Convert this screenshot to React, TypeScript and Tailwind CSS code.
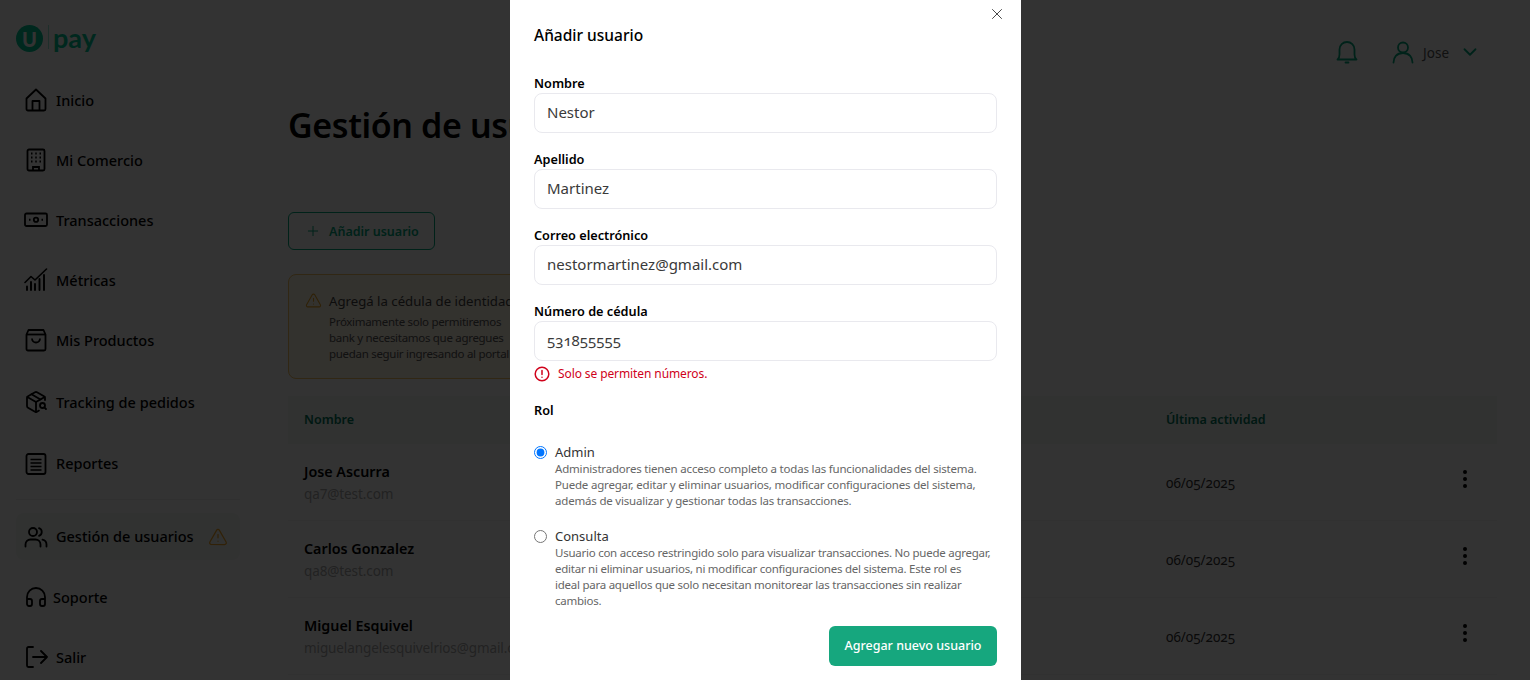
import React from 'react';
import { Plus, TriangleAlert, X, ChevronDown, EllipsisVertical, PackageSearch, Headphones } from 'lucide-react';

const font = { fontFamily: '"Noto Sans", sans-serif' };

const IconHome = () => (
  <svg width="24" height="24" viewBox="0 0 24 24" fill="none" stroke="currentColor" strokeWidth="1.800" strokeLinejoin="round">
    <path d="M2.500 10.500 12 1.500l9.500 9v10.500a1.500 1.500 0 0 1-1.500 1.500H4a1.500 1.500 0 0 1-1.500-1.500z" />
    <path d="M8.500 22.500V13h7v9.500" />
  </svg>
);

const IconBuilding = () => (
  <svg width="24" height="24" viewBox="0 0 24 24" fill="none" stroke="currentColor" strokeWidth="1.800">
    <rect x="3.500" y="1.500" width="17" height="21" rx="1.500" />
    <path d="M9 22.500V19h6v3.500" />
    <path d="M7 5.500h1.500M11.250 5.500h1.500M15.500 5.500H17M7 9.500h1.500M11.250 9.500h1.500M15.500 9.500H17M7 13.500h1.500M11.250 13.500h1.500M15.500 13.500H17" strokeWidth="2" />
  </svg>
);

const IconMoney = () => (
  <svg width="24" height="24" viewBox="0 0 24 24" fill="none" stroke="currentColor" strokeWidth="1.800">
    <rect x="1" y="5.500" width="22" height="12.500" rx="1.500" />
    <circle cx="12" cy="11.750" r="2.200" />
    <path d="M5 11.750h1.500M17.500 11.750H19" strokeWidth="2" />
  </svg>
);

const IconChart = () => (
  <svg width="24" height="24" viewBox="0 0 24 24" fill="none" stroke="currentColor" strokeWidth="1.600" strokeLinecap="round" strokeLinejoin="round">
    <path d="M1 14.500 7 8.500l4 3.500L22.500 1" />
    <path d="M3 22v-3.500M7 22v-8M11 22v-6M15.500 22V11M20 22V7" strokeWidth="1.900" />
  </svg>
);

const IconBag = () => (
  <svg width="24" height="24" viewBox="0 0 24 24" fill="none" stroke="currentColor" strokeWidth="1.800" strokeLinejoin="round">
    <path d="M4.500 2h15l2 4.500V21a1.500 1.500 0 0 1-1.500 1.500H4A1.500 1.500 0 0 1 2.500 21V6.500z" />
    <path d="M2.500 6.500h19" />
    <path d="M8 10.500a4 4 0 0 0 8 0" />
  </svg>
);

const IconReport = () => (
  <svg width="24" height="24" viewBox="0 0 24 24" fill="none" stroke="currentColor" strokeWidth="1.800">
    <rect x="2.500" y="2" width="19" height="20" rx="2" />
    <path d="M6.500 7.500h11M6.500 11h11M6.500 14.500h11M6.500 18h11" strokeWidth="1.500" />
  </svg>
);

const IconUsers = () => (
  <svg width="24" height="24" viewBox="0 0 24 24" fill="none" stroke="currentColor" strokeWidth="1.800" strokeLinecap="round">
    <circle cx="9" cy="7" r="4" />
    <path d="M1.500 21.500v-2a5 5 0 0 1 5-5h5a5 5 0 0 1 5 5v2" />
    <path d="M15 3.200a4 4 0 0 1 0 7.600M18.500 14.700a5 5 0 0 1 4 4.800v2" />
  </svg>
);

const IconExit = () => (
  <svg width="24" height="24" viewBox="0 0 24 24" fill="none" stroke="currentColor" strokeWidth="1.800" strokeLinecap="round" strokeLinejoin="round">
    <path d="M9 2H4.500A1.500 1.500 0 0 0 3 3.500v17A1.500 1.500 0 0 0 4.500 22H9" />
    <path d="M9 12h14M17 6l6 6-6 6" />
  </svg>
);

const IconBell = () => (
  <svg width="24" height="24" viewBox="0 0 24 24" fill="none" stroke="currentColor" strokeWidth="1.800" strokeLinejoin="round" strokeLinecap="round">
    <path d="M2.500 19.500c1.500-1 2-2.500 2-5V9.500a7.500 7.500 0 0 1 15 0v5c0 2.500.5 4 2 5z" />
    <path d="M10.500 22.500h3" />
  </svg>
);

const IconUser = () => (
  <svg width="24" height="24" viewBox="0 0 24 24" fill="none" stroke="currentColor" strokeWidth="1.800" strokeLinecap="round">
    <circle cx="12" cy="7.500" r="5" />
    <path d="M2.500 22.500c0-5 3-9.500 9.500-9.500s9.500 4.500 9.500 9.500" />
  </svg>
);

const NavItem = ({ icon, label, className = '' }: { icon: React.ReactNode; label: string; className?: string }) => (
  <div className={`flex items-center gap-[8px] pl-[8px] text-[14.500px] font-medium text-black ${className}`}>
    <span className="w-[24px] h-[24px] shrink-0">{icon}</span>
    <span className="mt-[1px]">{label}</span>
  </div>
);

const Field = ({ label, value, className = 'mb-[16px]' }: { label: string; value: string; className?: string }) => (
  <label className={`block ${className}`}>
    <span className="block h-[20px] text-[12.700px] leading-[21px] font-semibold text-black">{label}</span>
    <input
      readOnly
      value={value}
      className="block w-full h-[40px] px-[12px] pb-[2px] rounded-[8px] border border-[#e9e9ee] text-[15px] oldstyle-nums text-[#3a3a3a] outline-none"
    />
  </label>
);

const users = [
  { name: 'Jose Ascurra', email: 'qa7@test.com' },
  { name: 'Carlos Gonzalez', email: 'qa8@test.com' },
  { name: 'Miguel Esquivel', email: 'miguelangelesquivelrios@gmail.com' },
];

export default function App() {
  return (
    <div style={font} className="relative h-[680px] overflow-hidden bg-white flex">
      {/* Sidebar */}
      <aside className="w-[288px] shrink-0 pl-[16px] pr-[48px]">
        <div className="h-[70px] flex items-start pt-[25px]">
          <div style={{ fontFamily: 'Lato, sans-serif' }} className="w-[27px] h-[27px] rounded-full bg-[#00c896] flex items-center justify-center text-[20px] leading-none font-black text-white">U</div>
          <div className="ml-[5px] mr-[4px] w-px h-[24px] bg-[#00c896]/40" />
          <span style={{ fontFamily: 'Lato, sans-serif' }} className="text-[27px] leading-[26px] font-bold text-[#00c896]">pay</span>
        </div>
        <NavItem className="h-[60px]" icon={<IconHome />} label="Inicio" />
        <NavItem className="h-[60px]" icon={<IconBuilding />} label="Mi Comercio" />
        <NavItem className="h-[60px]" icon={<IconMoney />} label="Transacciones" />
        <NavItem className="h-[60px]" icon={<IconChart />} label="Métricas" />
        <NavItem className="h-[60px]" icon={<IconBag />} label="Mis Productos" />
        <NavItem className="h-[64px]" icon={<PackageSearch size={24} strokeWidth={1.8} />} label="Tracking de pedidos" />
        <NavItem className="h-[59px]" icon={<IconReport />} label="Reportes" />
        <div className="h-px bg-[#f0f0f0] mt-[6px] mb-[13px]" />
        <div className="h-[47px] rounded-[8px] bg-[#f2f8f5] flex items-center justify-between pr-[12px]">
          <NavItem icon={<IconUsers />} label="Gestión de usuarios" />
          <TriangleAlert size={20} strokeWidth={1.5} className="text-[#f5a623]" />
        </div>
        <NavItem className="h-[60px] mt-[7px] !gap-[5px]" icon={<Headphones size={24} strokeWidth={1.8} />} label="Soporte" />
        <NavItem className="h-[60px]" icon={<IconExit />} label="Salir" />
      </aside>

      {/* Main */}
      <main className="flex-1 min-w-0 pr-[33px]">
        <header className="h-[82px] pt-[40px] flex items-start justify-end gap-[32px] pr-[16px] text-[#00a87e]">
          <span className="w-[24px] h-[24px]"><IconBell /></span>
          <div className="flex items-center gap-[8px]">
            <IconUser />
            <span className="mt-[3px] text-[13.500px] text-[#555]">Jose</span>
            <ChevronDown size={22} strokeWidth={2} className="ml-[2px]" />
          </div>
        </header>
        <h1 className="mt-[18px] text-[34px] tracking-[-0.4px] leading-[50px] font-semibold text-black">Gestión de usuarios</h1>
        <button className="mt-[62px] h-[38px] w-[147px] flex items-center pl-[16px] gap-[8px] rounded-[6px] border border-[#00a87e] text-[12.500px] font-semibold text-[#00a87e]">
          <Plus size={16} strokeWidth={1.5} />
          <span className="mt-[2px]">Añadir usuario</span>
        </button>
        <div className="mt-[24px] w-[600px] h-[105px] rounded-[8px] border border-[#f2c063] bg-[#fff7e6] pl-[16px] pt-[16px] flex gap-[7px]">
          <TriangleAlert size={17} strokeWidth={1.5} className="text-[#e9a320] shrink-0 mt-[1px]" />
          <div className="whitespace-nowrap text-[#555]">
            <p className="text-[13.200px] leading-[20px] text-[#444]">Agregá la cédula de identidad</p>
            <p className="mt-[3px] text-[11.500px] tracking-[-0.3px] leading-[16px]">
              Próximamente solo permitiremos<br />
              bank y necesitamos que agregues<br />
              puedan seguir ingresando al portal
            </p>
          </div>
        </div>
        <div className="mt-[17px]">
          <div className="h-[48px] flex items-center justify-between bg-[#f2f8f5] pl-[16px] text-[12.500px] font-semibold text-[#00775a]">
            <span>Nombre</span>
            <span className="w-[331px]">Última actividad</span>
          </div>
          {users.map((u) => (
            <div key={u.email} className="h-[77px] flex items-center justify-between border-b border-[#f4f4f4] pl-[16px]">
              <div className="mt-[1px]">
                <p className="text-[14.300px] leading-[20px] font-semibold text-black">{u.name}</p>
                <p className="mt-[2px] text-[13.500px] tracking-[-0.1px] leading-[20px] text-[#aaa]">{u.email}</p>
              </div>
              <div className="w-[331px] flex items-center justify-between pr-[20px]">
                <span className="mt-[3px] text-[13.500px] oldstyle-nums text-[#333]">06/05/2025</span>
                <EllipsisVertical size={24} className="-mt-[6px] text-black" />
              </div>
            </div>
          ))}
        </div>
      </main>

      {/* Overlay */}
      <div className="absolute inset-0 bg-black/80" />

      {/* Modal */}
      <div className="absolute top-0 bottom-0 left-[510px] w-[511px] bg-white px-[24px] overflow-hidden">
        <X size={18} strokeWidth={1.2} className="absolute top-[5px] right-[15px] text-[#333]" />
        <h2 className="pt-[24px] text-[15.500px] leading-[22px] font-medium text-black">Añadir usuario</h2>
        <form className="mt-[27px]">
          <Field label="Nombre" value="Nestor" />
          <Field label="Apellido" value="Martinez" />
          <Field label="Correo electrónico" value="nestormartinez@gmail.com" />
          <Field label="Número de cédula" value="531855555" className="" />
          <div className="mt-[5px] flex items-center gap-[8px] text-[12px] tracking-[-0.1px] leading-[16px] text-[#d0021b]">
            <svg width="16" height="16" viewBox="0 0 16 16" fill="none" stroke="currentColor" strokeWidth="1.500" strokeLinecap="round">
              <circle cx="8" cy="8" r="6.800" />
              <path d="M8 4.500v4M8 11.200v.1" />
            </svg>
            Solo se permiten números.
          </div>
          <p className="mt-[18px] text-[12.700px] leading-[20px] font-semibold text-black">Rol</p>
          <div className="mt-[21px] flex gap-[8px]">
            <input type="radio" readOnly checked name="rol" className="w-[13px] h-[13px] mt-[5px] shrink-0 m-0" />
            <div className="pt-[2px]">
              <p className="text-[13px] leading-[18px] text-[#333]">Admin</p>
              <p className="text-[11.500px] tracking-[-0.19px] leading-[16px] text-[#666]">
                Administradores tienen acceso completo a todas las funcionalidades del sistema. Puede agregar, editar y eliminar usuarios, modificar configuraciones del sistema, además de visualizar y gestionar todas las transacciones.
              </p>
            </div>
          </div>
          <div className="mt-[16px] flex gap-[8px]">
            <input type="radio" readOnly name="rol" className="w-[13px] h-[13px] mt-[5px] shrink-0 m-0" />
            <div className="pt-[2px]">
              <p className="text-[13px] leading-[18px] text-[#333]">Consulta</p>
              <p className="text-[11.500px] tracking-[-0.25px] leading-[16px] text-[#666]">
                Usuario con acceso restringido solo para visualizar transacciones. No puede agregar,<br />
                editar ni eliminar usuarios, ni modificar configuraciones del sistema. Este rol es<br />
                ideal para aquellos que solo necesitan monitorear las transacciones sin realizar<br />
                cambios.
              </p>
            </div>
          </div>
          <div className="mt-[17px] flex justify-end">
            <button type="button" className="h-[40px] w-[168px] rounded-[6px] bg-[#16a77e] text-[12.500px] font-medium text-white">Agregar nuevo usuario</button>
          </div>
        </form>
      </div>
    </div>
  );
}
